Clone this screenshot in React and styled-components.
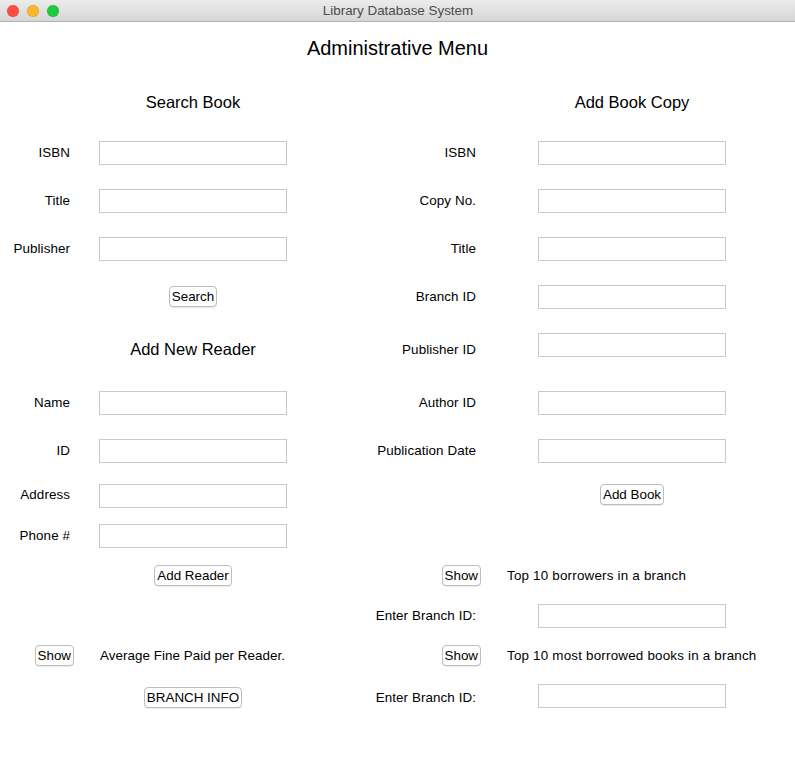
import React from "react";
import styled, { createGlobalStyle } from "styled-components";

const GlobalStyle = createGlobalStyle`
  html, body { margin: 0; padding: 0; background: #fff; }
  body { font-family: "Liberation Sans", Arial, sans-serif; }
`;

const Window = styled.div`
  width: 795px;
  height: 771px;
  background: #fff;
  overflow: hidden;
  display: flex;
  flex-direction: column;
`;

const TitleBar = styled.div`
  height: 22px;
  box-sizing: border-box;
  display: grid;
  grid-template-columns: 1fr auto 1fr;
  align-items: center;
  background: linear-gradient(#ececec, #d6d6d6);
  border-bottom: 1px solid #b4b4b4;
`;

const Lights = styled.div`
  display: flex;
  gap: 8px;
  padding-left: 7px;
`;

const Light = styled.span`
  width: 12px;
  height: 12px;
  border-radius: 50%;
  background: ${(p) => p.$color};
  box-shadow: inset 0 0 0 0.5px rgba(0, 0, 0, 0.15);
`;

const WindowTitle = styled.div`
  font-size: 13.4px;
  color: #4c4c4c;
  padding-left: 1px;
`;

const Heading = styled.h1`
  margin: 0;
  height: 52px;
  line-height: 52px;
  text-align: center;
  font-weight: normal;
  font-size: 20px;
  color: #000;
`;

const Form = styled.div`
  margin-top: 2px;
  display: grid;
  grid-template-columns: 85px 216px 192px 278px;
  grid-template-rows: 52px repeat(4, 48px) 58px 48px 48px 41px 40px 40px 40px 40px 44px;
  align-items: center;
  font-size: 13.4px;
  color: #000;
`;

const Empty = styled.span``;

const SectionTitle = styled.h2`
  margin: 0;
  font-weight: normal;
  font-size: 16.5px;
  text-align: center;
`;

const Label = styled.span`
  justify-self: end;
  padding-right: ${(p) => p.$inset}px;
  white-space: nowrap;
  letter-spacing: 0.08px;
`;

const Note = styled.span`
  justify-self: start;
  padding-left: ${(p) => p.$inset}px;
  white-space: nowrap;
  letter-spacing: ${(p) => (p.$wide ? 0.2 : 0.05)}px;
`;

const Field = styled.input`
  justify-self: center;
  width: 188px;
  height: 24px;
  box-sizing: border-box;
  border: 1px solid #c9c9c9;
  background: #fff;
  outline: none;
  margin: 2px 0 ${(p) => p.$lift || 0}px;
`;

const Button = styled.button`
  justify-self: ${(p) => (p.$inset != null ? "end" : "center")};
  margin-right: ${(p) => p.$inset || 0}px;
  height: 21px;
  padding: 0 2px;
  font: 13.4px "Liberation Sans", Arial, sans-serif;
  color: #000;
  background: #fff;
  border: 1px solid #bdbdbd;
  border-radius: 4px;
  box-shadow: 0 1px 0.5px rgba(0, 0, 0, 0.08);
`;

const L = (t) => <Label $inset={15}>{t}</Label>;
const R = (t) => <Label $inset={17}>{t}</Label>;
const F = (lift) => <Field $lift={lift} />;
const E = () => <Empty />;

export default function App() {
  const rows = [
    [E(), <SectionTitle>Search Book</SectionTitle>, E(), <SectionTitle>Add Book Copy</SectionTitle>],
    [L("ISBN"), F(), R("ISBN"), F()],
    [L("Title"), F(), R("Copy No."), F()],
    [L("Publisher"), F(), R("Title"), F()],
    [E(), <Button>Search</Button>, R("Branch ID"), F()],
    [E(), <SectionTitle>Add New Reader</SectionTitle>, R("Publisher ID"), F(10)],
    [L("Name"), F(), R("Author ID"), F()],
    [L("ID"), F(), R("Publication Date"), F()],
    [L("Address"), F(), E(), <Button>Add Book</Button>],
    [L("Phone #"), F(), E(), E()],
    [E(), <Button>Add Reader</Button>, <Button $inset={12}>Show</Button>, <Note $inset={14} $wide>Top 10 borrowers in a branch</Note>],
    [E(), E(), R("Enter Branch ID:"), F()],
    [<Button $inset={11}>Show</Button>, <Note $inset={15}>Average Fine Paid per Reader.</Note>, <Button $inset={12}>Show</Button>, <Note $inset={14} $wide>Top 10 most borrowed books in a branch</Note>],
    [E(), <Button>BRANCH INFO</Button>, R("Enter Branch ID:"), F(5)],
  ];

  return (
    <>
      <GlobalStyle />
      <Window>
        <TitleBar>
          <Lights>
            <Light $color="#fe4d47" />
            <Light $color="#fdb72a" />
            <Light $color="#1dc93e" />
          </Lights>
          <WindowTitle>Library Database System</WindowTitle>
          <span />
        </TitleBar>
        <Heading>Administrative Menu</Heading>
        <Form>
          {rows.map((row, i) => (
            <React.Fragment key={i}>
              {row.map((cell, j) => React.cloneElement(cell, { key: j }))}
            </React.Fragment>
          ))}
        </Form>
      </Window>
    </>
  );
}
